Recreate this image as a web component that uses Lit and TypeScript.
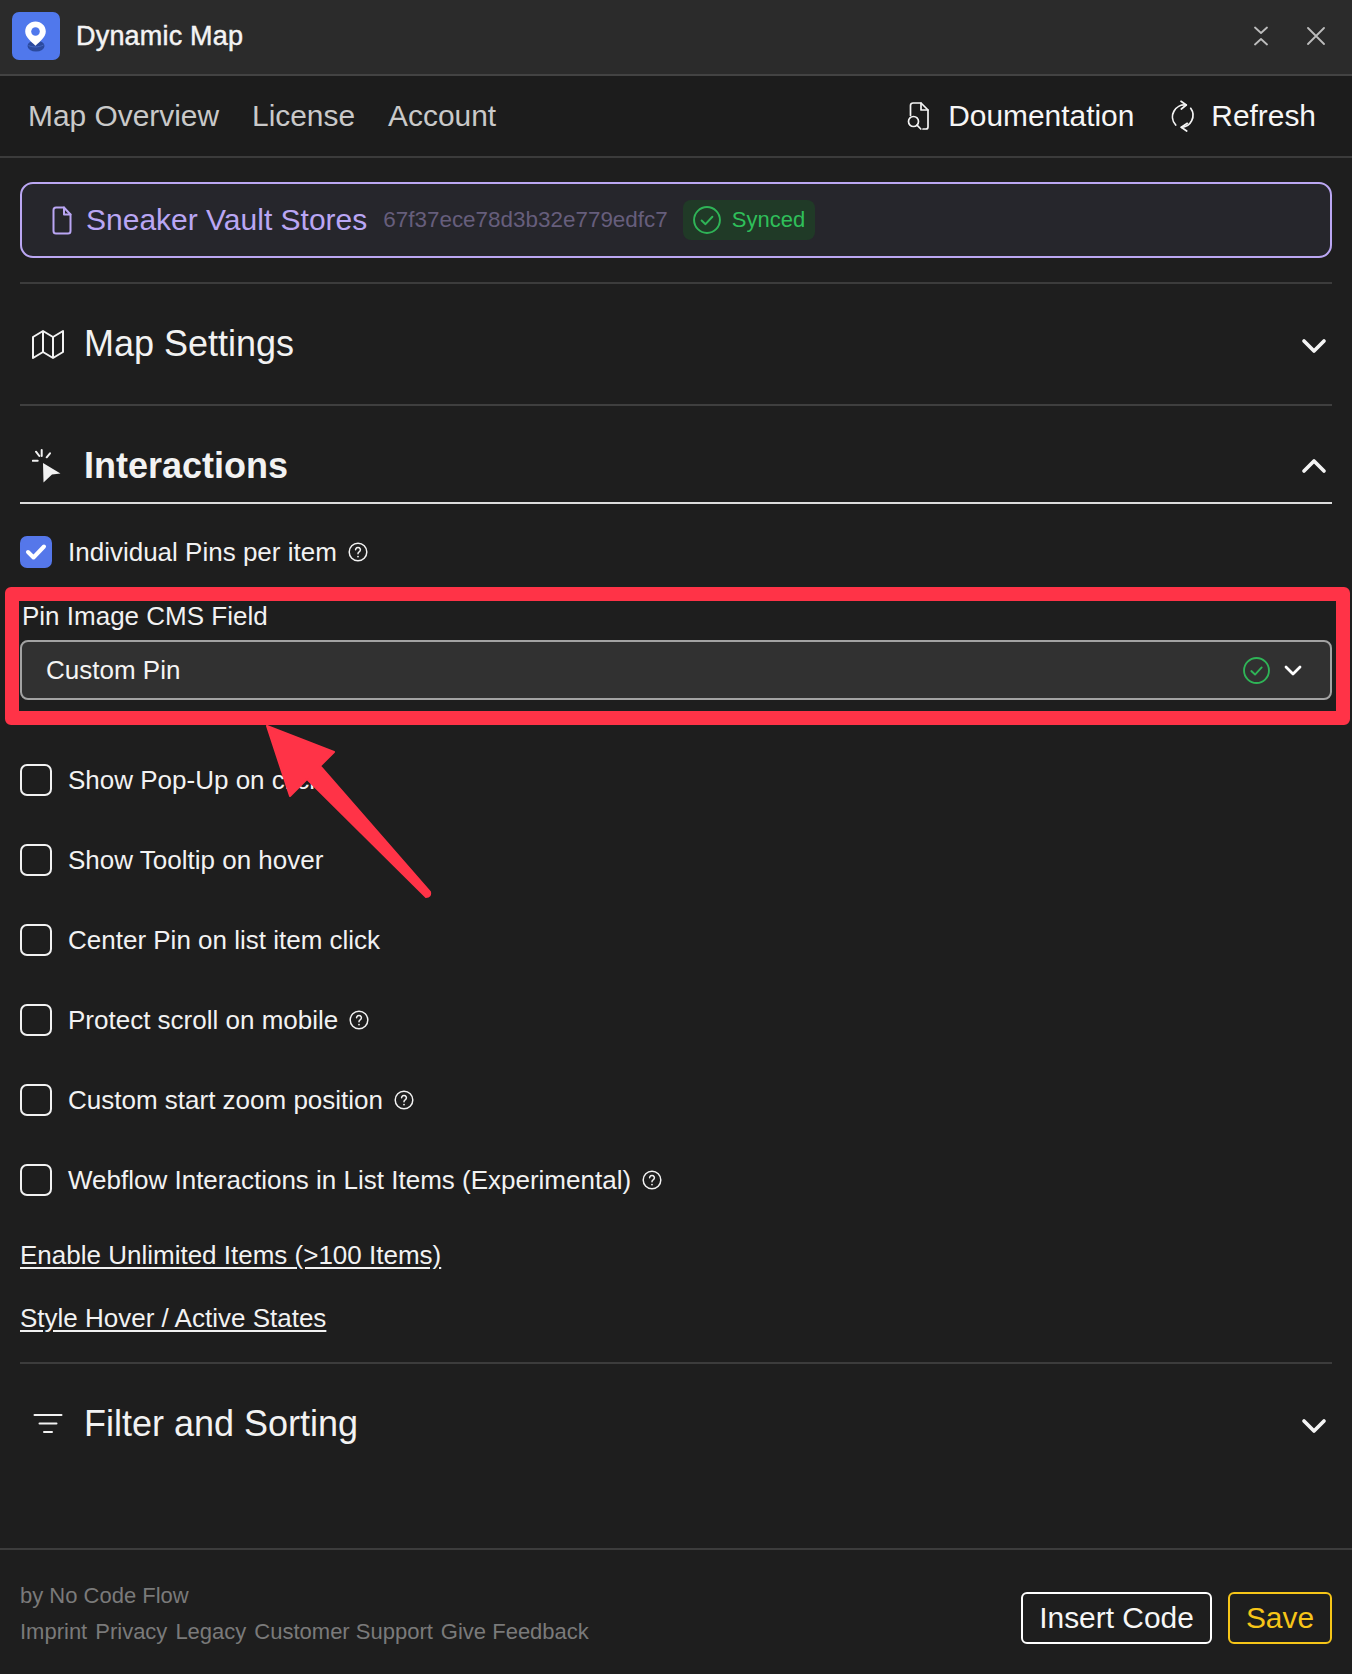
import { LitElement, html, css } from "lit";
import { customElement } from "lit/decorators.js";

const help = html`<svg class="help" viewBox="0 0 20 20" fill="none" stroke="#f2f2f2" stroke-width="1.5"><circle cx="10" cy="10" r="8.8"/><path d="M7.6 7.8a2.4 2.4 0 1 1 3.6 2.1c-.8.5-1.2 1-1.2 1.9" stroke-linecap="round"/><circle cx="10" cy="14.6" r=".9" fill="#f2f2f2" stroke="none"/></svg>`;
const chevDown = html`<svg class="chev down" viewBox="0 0 26 16" fill="none" stroke="#f4f4f4" stroke-width="3.7" stroke-linecap="round" stroke-linejoin="round"><path d="M3 3l10 10L23 3"/></svg>`;
const chevUp = html`<svg class="chev" viewBox="0 0 26 16" fill="none" stroke="#f4f4f4" stroke-width="3.7" stroke-linecap="round" stroke-linejoin="round"><path d="M3 13L13 3l10 10"/></svg>`;
const checkCircle = (s: number) => html`<svg style="width:${s}px;height:${s}px" class="ok" viewBox="0 0 26 26" fill="none" stroke="#2fb457" stroke-width="1.8" stroke-linecap="round" stroke-linejoin="round"><circle cx="13" cy="13" r="12"/><path d="M8 13.5l3.6 3.4L18 10"/></svg>`;

const rows: { label: string; help?: boolean }[] = [
  { label: "Show Pop-Up on click" },
  { label: "Show Tooltip on hover" },
  { label: "Center Pin on list item click" },
  { label: "Protect scroll on mobile", help: true },
  { label: "Custom start zoom position", help: true },
  { label: "Webflow Interactions in List Items (Experimental)", help: true },
];

@customElement("app-root")
export class AppRoot extends LitElement {
  static styles = css`
    :host { display: block; width: 1352px; height: 1674px; background: #1e1e1e; color: #f2f2f2; font-family: "Liberation Sans", Arial, sans-serif; position: relative; overflow: hidden; }
    * { box-sizing: border-box; }
    .root { display: flex; flex-direction: column; height: 1674px; }
    .titlebar { height: 76px; flex: none; background: #2b2b2b; border-bottom: 2px solid #434343; display: flex; align-items: center; padding: 0 27px 2px 12px; }
    .logo { width: 48px; height: 48px; flex: none; display: block; }
    .apptitle { margin-left: 16px; margin-top: 0; font-size: 27px; font-weight: 400; -webkit-text-stroke: .45px #f4f4f4; color: #f4f4f4; flex: 1; letter-spacing: .2px; }
    .winicons { display: flex; align-items: center; gap: 39px; }
    .winicons svg { display: block; }
    .nav { height: 82px; flex: none; background: #1c1c1c; border-bottom: 2px solid #3b3b3b; display: flex; align-items: center; padding: 0 36px 0 28px; font-size: 29.9px; }
    .nav .left { display: flex; gap: 33px; color: #c9c9c9; flex: 1; }
    .nav .right { display: flex; align-items: center; color: #f6f6f6; }
    .nav .right svg { display: block; flex: none; }
    .nav .doc { margin-right: 17px; }
    .nav .ref { margin-left: 37px; margin-right: 15px; }
    .content { flex: 1; padding: 24px 20px 0; display: flex; flex-direction: column; }
    .card { height: 76px; flex: none; border: 2px solid #bba7f3; border-radius: 13px; background: #26262c; display: flex; align-items: center; padding-left: 30px; }
    .card .file { width: 20px; height: 29px; display: block; flex: none; margin-right: 14px; }
    .card .name { font-size: 30px; color: #baa6f4; margin-right: 16px; white-space: nowrap; }
    .card .id { font-size: 22.45px; color: #665e7c; margin-right: 15px; white-space: nowrap; }
    .badge { height: 40px; display: flex; align-items: center; gap: 11px; padding: 0 10px; background: #203a27; border-radius: 8px; color: #2fbf5a; font-size: 22px; }
    .sec { height: 114px; flex: none; display: flex; align-items: center; padding-left: 12px; padding-right: 5px; font-size: 36px; color: #f2f2f2; }
    .sec-first { margin-top: 24px; border-top: 2px solid #3c3c3c; height: 122px; }
    .sec-active { border-top: 2px solid #3f3f3f; border-bottom: 2px solid #dcdcdc; font-weight: 700; height: 100px; padding-top: 37px; padding-bottom: 13px; }
    .sec .ic { width: 32px; height: 32px; margin-right: 20px; display: block; flex: none; }
    .sec .t { flex: 1; white-space: nowrap; }
    .chev { width: 26px; height: 16px; display: block; flex: none; }
    .chev.down { margin-top: 3px; }
    .cb { width: 32px; height: 32px; border: 2px solid #f2f2f2; border-radius: 7px; flex: none; margin-right: 16px; display: block; }
    .cb.on { background: #5577ea; border-color: #5577ea; display: flex; align-items: center; justify-content: center; }
    .row { display: flex; align-items: center; height: 32px; font-size: 26px; color: #f2f2f2; white-space: nowrap; }
    .help { width: 20px; height: 20px; display: block; flex: none; margin-left: 11px; }
    .first-row { margin-top: 32px; }
    .field { position: relative; margin-top: 32px; display: flex; flex-direction: column; }
    .field .lab { font-size: 26px; line-height: 32px; height: 40px; padding-left: 2px; }
    .redbox { position: absolute; left: -15px; right: -18px; top: -13px; height: 138px; border: 14px solid #ff3347; border-radius: 6px; }
    .select { height: 60px; border: 2px solid #a3a3a3; border-radius: 8px; background: #313131; display: flex; align-items: center; padding: 0 28px 0 24px; font-size: 26px; color: #f4f4f4; }
    .select .v { flex: 1; }
    .select .sc { width: 18px; height: 11px; display: block; margin-left: 14px; }
    .rows { margin-top: 64px; display: flex; flex-direction: column; gap: 48px; }
    .links { margin-top: 44px; display: flex; flex-direction: column; gap: 32px; }
    .links a { font-size: 26px; line-height: 31px; color: #f2f2f2; text-decoration: underline; text-underline-offset: 3px; }
    .sec-filter { margin-top: 28px; border-top: 2px solid #3c3c3c; height: 122px; }
    .footer { height: 126px; flex: none; border-top: 2px solid #3c3c3c; display: flex; align-items: center; justify-content: space-between; padding: 0 20px; }
    .meta { color: #7a7a7a; font-size: 22px; line-height: 36px; margin-top: 3px; }
    .meta .ls { display: flex; gap: 8px; }
    .btns { display: flex; gap: 16px; margin-top: 12px; }
    .btn { height: 52px; border: 2px solid #fff; border-radius: 6px; font-size: 29.9px; display: flex; align-items: center; justify-content: center; color: #f6f6f6; width: 191px; }
    .btn.save { width: 104px; border-color: #f6c518; color: #f6c518; }
    .arrow { position: absolute; left: 0; top: 0; width: 1352px; height: 1674px; pointer-events: none; }
  `;

  render() {
    return html`
      <div class="root">
        <div class="titlebar">
          <svg class="logo" viewBox="0 0 48 48">
            <rect width="48" height="48" rx="7" fill="#5078ec"/>
            <ellipse cx="24" cy="34" rx="8.5" ry="5.5" fill="#2b4a9e"/>
            <path d="M16.500 33.500c4 2 10 2 15-.5" fill="none" stroke="#4468c4" stroke-width="1"/>
            <path d="M23.500 9.500c-5.800 0-10.300 4.400-10.300 10 0 5.600 5.700 9.800 10.300 14.300 4.600-4.500 10.300-8.700 10.300-14.300 0-5.600-4.500-10-10.300-10z" fill="#fff"/>
            <circle cx="23.500" cy="19.500" r="4.300" fill="#5078ec"/>
          </svg>
          <div class="apptitle">Dynamic Map</div>
          <div class="winicons">
            <svg width="14" height="20" viewBox="0 0 14 20" fill="none" stroke="#bdbdbd" stroke-width="1.800" stroke-linecap="round" stroke-linejoin="round"><path d="M1 1.500L7 7l6-5.500"/><path d="M1 18.500L7 13l6 5.500"/></svg>
            <svg width="18" height="18" viewBox="0 0 18 18" fill="none" stroke="#bdbdbd" stroke-width="1.800" stroke-linecap="round"><path d="M1 1l16 16M17 1L1 17"/></svg>
          </div>
        </div>
        <div class="nav">
          <div class="left"><span>Map Overview</span><span>License</span><span>Account</span></div>
          <div class="right">
            <svg class="doc" width="25" height="29" viewBox="0 0 25 29" fill="none" stroke="#f4f4f4" stroke-width="1.700" stroke-linecap="round" stroke-linejoin="round">
              <path d="M4.500 13.500V3.500c0-1.400 1.100-2.500 2.500-2.500h8l7 7v17c0 1.100-.9 2-2 2h-3"/><path d="M15 1v7h7"/><circle cx="7.500" cy="19.500" r="5"/><path d="M11 23.200l3.800 3.800"/>
            </svg>
            <span>Doumentation</span>
            <svg class="ref" width="25" height="33" viewBox="0 -1 25 33" fill="none" stroke="#f4f4f4" stroke-width="1.700" stroke-linecap="round" stroke-linejoin="round">
              <path d="M15.300 4A12 12 0 0 0 4.700 24"/><path d="M10.300 26.300A12 12 0 0 0 19.700 7.300"/><path d="M10 .3l5.300 3.700-5 4"/><path d="M16.300 22.300l-6 4 5.400 3.700"/>
            </svg>
            <span>Refresh</span>
          </div>
        </div>
        <div class="content">
          <div class="card">
            <svg class="file" viewBox="0 0 20 29" fill="none" stroke="#baa6f4" stroke-width="2" stroke-linecap="round" stroke-linejoin="round"><path d="M12 1.500H4C2.600 1.500 1.500 2.600 1.500 4v21c0 1.400 1.100 2.500 2.500 2.500h12c1.400 0 2.500-1.100 2.500-2.500V8.500z"/><path d="M12 1.500V8.500h6.500"/></svg>
            <span class="name">Sneaker Vault Stores</span>
            <span class="id">67f37ece78d3b32e779edfc7</span>
            <span class="badge">${checkCircle(28)}<span>Synced</span></span>
          </div>
          <div class="sec sec-first">
            <svg class="ic" viewBox="0 0 32 32" fill="none" stroke="#f2f2f2" stroke-width="2" stroke-linejoin="round"><path d="M1 9l10-6 10 6 10-6v21l-10 6-10-6-10 6z"/><path d="M11 3v21M21 9v21"/></svg>
            <span class="t">Map Settings</span>${chevDown}
          </div>
          <div class="sec sec-active">
            <svg class="ic" style="height:36px" viewBox="0 0 32 36" fill="none" stroke="#f2f2f2" stroke-width="2" stroke-linecap="round">
              <path d="M4 3.700l3.300 4.300M9.700 2v6M18 5.300l-3.300 4M.8 12.700h4.900"/><path d="M11 15l17.500 10.500-8.500 1L11.500 34.500z" fill="#f2f2f2" stroke="none"/>
            </svg>
            <span class="t">Interactions</span>${chevUp}
          </div>
          <div class="row first-row">
            <span class="cb on"><svg width="24" height="20" viewBox="0 0 24 20" fill="none" stroke="#fff" stroke-width="4" stroke-linecap="round" stroke-linejoin="round"><path d="M4 10l5.500 5.500L20 4.500"/></svg></span>
            <span>Individual Pins per item</span>${help}
          </div>
          <div class="field">
            <div class="lab">Pin Image CMS Field</div>
            <div class="select">
              <span class="v">Custom Pin</span>
              ${checkCircle(27)}
              <svg class="sc" viewBox="0 0 18 11" fill="none" stroke="#fff" stroke-width="2.800" stroke-linecap="round" stroke-linejoin="round"><path d="M2 2l7 7 7-7"/></svg>
            </div>
            <div class="redbox"></div>
          </div>
          <div class="rows">
            ${rows.map((r) => html`<div class="row"><span class="cb"></span><span>${r.label}</span>${r.help ? help : ""}</div>`)}
          </div>
          <div class="links">
            <a>Enable Unlimited Items (&gt;100 Items)</a>
            <a>Style Hover / Active States</a>
          </div>
          <div class="sec sec-filter">
            <svg class="ic" viewBox="0 0 32 32" fill="none" stroke="#f2f2f2" stroke-width="2" stroke-linecap="round"><path d="M2.500 7h27M7.500 15.500h17M12 24h8"/></svg>
            <span class="t">Filter and Sorting</span>${chevDown}
          </div>
        </div>
        <div class="footer">
          <div class="meta">
            <div>by No Code Flow</div>
            <div class="ls"><span>Imprint</span><span>Privacy</span><span>Legacy</span><span>Customer Support</span><span>Give Feedback</span></div>
          </div>
          <div class="btns"><div class="btn">Insert Code</div><div class="btn save">Save</div></div>
        </div>
      </div>
      <svg class="arrow" viewBox="0 0 1352 1674"><path d="M267 726L334 752 320 766 430 892Q431 897 426 897L307 779 290 796z" fill="#ff3347" stroke="#ff3347" stroke-width="2" stroke-linejoin="round"/></svg>
    `;
  }
}
